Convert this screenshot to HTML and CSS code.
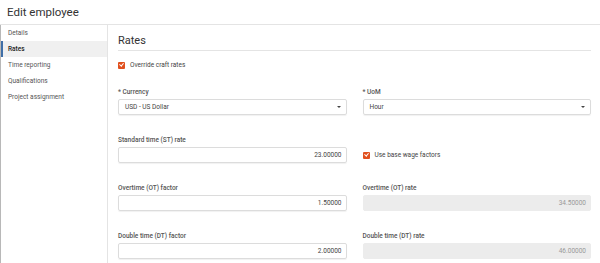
FILE: index.html
```html
<!DOCTYPE html>
<html lang="en">
<head>
  <meta charset="UTF-8" />
  <title>Edit employee</title>
  <link rel="stylesheet" href="styles.css">
</head>
<body>

  <!-- Page header -->
  <div class="page-header">Edit employee</div>

  <div class="layout">
    <!-- Side navigation -->
    <ul class="side-nav">
      <li>Details</li>
      <li class="active">Rates</li>
      <li>Time reporting</li>
      <li>Qualifications</li>
      <li>Project assignment</li>
    </ul>

    <!-- Rates form -->
    <div class="content">
      <h2 class="section-title">Rates</h2>

      <label class="check-row">
        <span class="checkbox"></span>
        Override craft rates
      </label>

      <div class="fields">
        <div class="field">
          <div class="field-label">* Currency</div>
          <div class="select">USD - US Dollar<span class="caret"></span></div>
        </div>
        <div class="field">
          <div class="field-label">* UoM</div>
          <div class="select">Hour<span class="caret"></span></div>
        </div>

        <div class="field">
          <div class="field-label">Standard time (ST) rate</div>
          <div class="input">23.00000</div>
        </div>
        <div class="field field-check">
          <label class="check-row">
            <span class="checkbox"></span>
            Use base wage factors
          </label>
        </div>

        <div class="field">
          <div class="field-label">Overtime (OT) factor</div>
          <div class="input">1.50000</div>
        </div>
        <div class="field">
          <div class="field-label">Overtime (OT) rate</div>
          <div class="input disabled">34.50000</div>
        </div>

        <div class="field">
          <div class="field-label">Double time (DT) factor</div>
          <div class="input">2.00000</div>
        </div>
        <div class="field">
          <div class="field-label">Double time (DT) rate</div>
          <div class="input disabled">46.00000</div>
        </div>
      </div>
    </div>
  </div>

</body>
</html>
```

FILE: styles.css
```css
body {
  margin: 0;
  background: #fff;
  color: #333;
  font-family: Roboto, "Noto Sans", Arial, sans-serif;
  height: 263px;
  overflow: hidden;
}

.page-header {
  height: 24px;
  line-height: 25px;
  padding-left: 7px;
  font-size: 11.5px;
  color: #333;
  border-bottom: 1px solid #e4e4e4;
}

.layout {
  display: flex;
  height: 238px;
}

.side-nav {
  list-style: none;
  margin: 0;
  padding: 0;
  width: 106px;
  border-left: 1px solid #b8b8b8;
  border-right: 1px solid #e4e4e4;
}

.side-nav li {
  height: 16px;
  line-height: 16px;
  padding-left: 7px;
  font-size: 6.5px;
  color: #555;
}

.side-nav li.active {
  background: #f0f0f0;
  box-shadow: inset 2px 0 0 #3f6fa8;
  font-weight: 500;
  color: #222;
}

.content {
  flex: 1;
  padding: 0 9px 0 10px;
}

.section-title {
  margin: 0;
  padding: 9px 0 2px;
  font-size: 11px;
  line-height: 14px;
  font-weight: 400;
  color: #333;
  border-bottom: 1px solid #e4e4e4;
}

.check-row {
  display: flex;
  align-items: center;
  gap: 5px;
  height: 10px;
  margin-top: 9px;
  font-size: 6.5px;
  color: #444;
}

.checkbox {
  position: relative;
  width: 7px;
  height: 7px;
  border-radius: 1px;
  background: #e1501e;
}

.checkbox::after {
  content: "";
  position: absolute;
  left: 2.3px;
  top: 0.8px;
  width: 1.5px;
  height: 3.2px;
  border: solid #fff;
  border-width: 0 1px 1px 0;
  transform: rotate(40deg);
}

.fields {
  display: grid;
  grid-template-columns: 1fr 1fr;
  column-gap: 16px;
  row-gap: 21px;
  margin-top: 18px;
}

.field-label {
  height: 8px;
  line-height: 8px;
  margin-bottom: 3px;
  font-size: 6.5px;
  font-weight: 500;
  color: #555;
}

.select,
.input {
  box-sizing: border-box;
  height: 16px;
  line-height: 14px;
  padding: 0 6px;
  font-size: 6.5px;
  color: #444;
  border: 1px solid #dcdcdc;
  border-radius: 2px;
  box-shadow: 0 1px 1px rgba(0, 0, 0, 0.06);
}

.select {
  display: flex;
  justify-content: space-between;
  align-items: center;
}

.caret {
  width: 0;
  height: 0;
  border-left: 2px solid transparent;
  border-right: 2px solid transparent;
  border-top: 2.5px solid #444;
  margin-right: -1px;
}

.input {
  text-align: right;
  padding-right: 4px;
}

.input.disabled {
  background: #ececec;
  border-color: #ececec;
  box-shadow: none;
  color: #999;
}

.field-check {
  display: flex;
  align-items: flex-end;
}

.field-check .check-row {
  height: 16px;
  margin-top: 0;
}
```
